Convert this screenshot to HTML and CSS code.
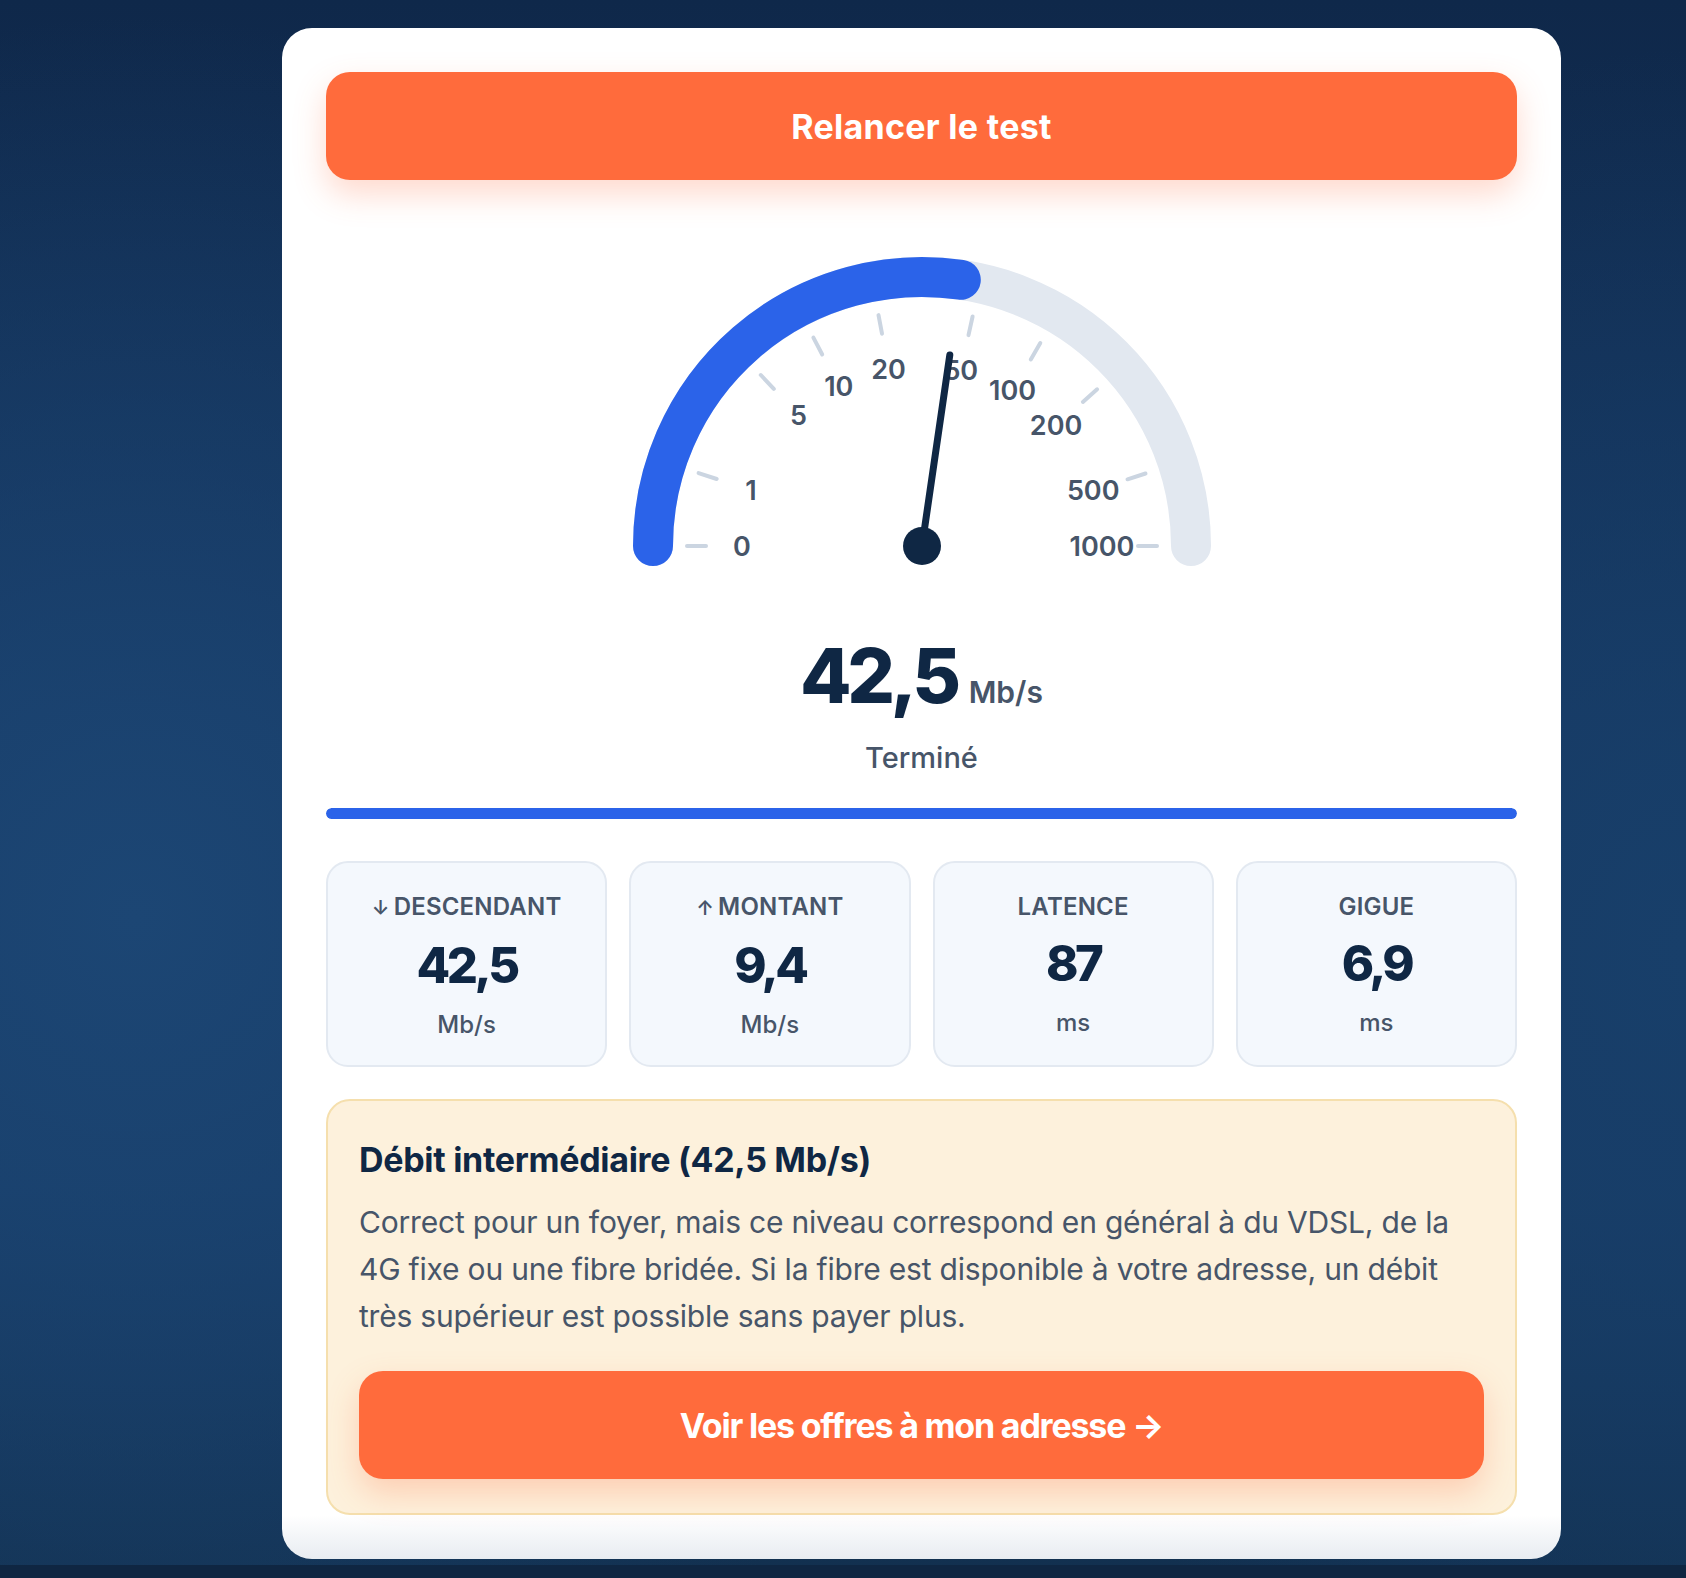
FILE: index.html
```html
<!DOCTYPE html>
<html lang="fr">
<head>
<meta charset="utf-8">
<title>Test de débit</title>
<link rel="stylesheet" href="styles.css">
</head>
<body>
<main class="page">
  <section class="card">
    <button class="btn btn-primary btn-relaunch" type="button">Relancer le test</button>

    <div class="gauge">
      <svg class="gauge-svg" width="600" height="320" viewBox="0 0 600 320" aria-hidden="true">
        <path class="gauge-track" d="M 31 290 A 269 269 0 0 1 569 290"/>
        <path class="gauge-fill" d="M 31 290 A 269 269 0 0 1 338.8 23.8"/>
        <g class="gauge-ticks">
          <line x1="84" y1="290" x2="65" y2="290"/>
          <line x1="94.7" y1="223.0" x2="76.6" y2="217.1"/>
          <line x1="151.8" y1="132.9" x2="138.8" y2="119.0"/>
          <line x1="200.2" y1="98.5" x2="191.4" y2="81.6"/>
          <line x1="260.0" y1="77.7" x2="256.5" y2="59.1"/>
          <line x1="346.5" y1="79.1" x2="350.6" y2="60.5"/>
          <line x1="408.8" y1="103.4" x2="418.3" y2="87.0"/>
          <line x1="460.9" y1="145.9" x2="475.1" y2="133.3"/>
          <line x1="505.5" y1="223.3" x2="523.5" y2="217.5"/>
          <line x1="516" y1="290" x2="535" y2="290"/>
        </g>
        <g class="gauge-labels">
          <text x="120" y="290">0</text>
          <text x="128.9" y="234.2">1</text>
          <text x="176.5" y="159.0">5</text>
          <text x="216.8" y="130.4">10</text>
          <text x="266.6" y="113.1">20</text>
          <text x="338.8" y="114.2">50</text>
          <text x="390.6" y="134.5">100</text>
          <text x="434.1" y="169.9">200</text>
          <text x="471.2" y="234.4">500</text>
          <text x="480" y="290">1000</text>
        </g>
        <line class="gauge-needle" x1="300" y1="290" x2="327.8" y2="99.0"/>
        <circle class="gauge-pivot" cx="300" cy="290" r="19"/>
      </svg>
    </div>

    <div class="reading">
      <span class="reading-value">42,5</span>
      <span class="reading-unit">Mb/s</span>
    </div>
    <div class="status">Terminé</div>

    <div class="progress"><div class="progress-fill" style="width:100%"></div></div>

    <div class="stats">
      <div class="stat">
        <div class="stat-label"><span class="stat-arrow">↓</span>Descendant</div>
        <div class="stat-value">42,5</div>
        <div class="stat-unit">Mb/s</div>
      </div>
      <div class="stat">
        <div class="stat-label"><span class="stat-arrow">↑</span>Montant</div>
        <div class="stat-value">9,4</div>
        <div class="stat-unit">Mb/s</div>
      </div>
      <div class="stat">
        <div class="stat-label">Latence</div>
        <div class="stat-value">87</div>
        <div class="stat-unit">ms</div>
      </div>
      <div class="stat">
        <div class="stat-label">Gigue</div>
        <div class="stat-value">6,9</div>
        <div class="stat-unit">ms</div>
      </div>
    </div>

    <div class="verdict">
      <h3 class="verdict-title">Débit intermédiaire (42,5 Mb/s)</h3>
      <p class="verdict-text">Correct pour un foyer, mais ce niveau correspond en général à du VDSL, de la 4G fixe ou une fibre bridée. Si la fibre est disponible à votre adresse, un débit très supérieur est possible sans payer plus.</p>
      <a class="btn btn-primary btn-cta" href="#">Voir les offres à mon adresse →</a>
    </div>
  </section>
</main>
<div class="page-foot"></div>
</body>
</html>
```

FILE: styles.css
```css
* { box-sizing: border-box; }

html, body { margin: 0; padding: 0; }

body {
  font-family: Inter, "Noto Sans", "Liberation Sans", sans-serif;
  min-height: 1578px;
  background:
    radial-gradient(ellipse 900px 900px at 8% 58%, #1c4674 0%, rgba(28,70,116,0) 100%),
    radial-gradient(ellipse 700px 900px at 100% 60%, #183f6a 0%, rgba(24,63,106,0) 100%),
    linear-gradient(180deg, #0f284a 0%, #153660 45%, #163a64 75%, #12304f 100%);
}

.page {
  padding: 28px 0 0 282px;
}

.card {
  width: 1279px;
  padding: 44px;
  border-radius: 30px;
  background: linear-gradient(180deg, #ffffff 0%, #ffffff calc(100% - 44px), #e8ecf1 100%);
}

.btn {
  font-family: inherit;
  cursor: pointer;
  text-decoration: none;
}

.btn-primary {
  display: flex;
  align-items: center;
  justify-content: center;
  width: 100%;
  height: 108px;
  border: 0;
  border-radius: 24px;
  background: #ff6b3c;
  color: #ffffff;
  font-size: 34px;
  font-weight: 700;
  box-shadow: 0 14px 32px rgba(255, 107, 60, 0.26);
}

.btn-relaunch {
  letter-spacing: 0.3px;
}

.gauge {
  display: flex;
  justify-content: center;
  margin-top: 76px;
}

.gauge-svg { display: block; overflow: visible; }

.gauge-track,
.gauge-fill {
  fill: none;
  stroke-width: 40;
  stroke-linecap: round;
}
.gauge-track { stroke: #e2e8f0; }
.gauge-fill { stroke: #2b63e9; }

.gauge-ticks line {
  stroke: #cbd5e1;
  stroke-width: 4;
  stroke-linecap: round;
}

.gauge-labels text {
  fill: #475569;
  font-family: Inter, "Noto Sans", sans-serif;
  font-size: 27px;
  font-weight: 600;
  text-anchor: middle;
  dominant-baseline: central;
}

.gauge-needle {
  stroke: #0f2744;
  stroke-width: 7;
  stroke-linecap: round;
}
.gauge-pivot { fill: #0f2744; }

.reading {
  display: flex;
  justify-content: center;
  align-items: baseline;
  gap: 12px;
  margin-top: 62px;
  height: 76px;
}

.reading-value {
  font-size: 75px;
  line-height: 76px;
  font-weight: 800;
  letter-spacing: -4.5px;
  color: #0f2744;
}

.reading-unit {
  font-size: 30px;
  line-height: 30px;
  font-weight: 600;
  color: #475569;
}

.status {
  margin-top: 26px;
  text-align: center;
  font-size: 29px;
  line-height: 35px;
  font-weight: 500;
  color: #475569;
}

.progress {
  margin-top: 33px;
  height: 11px;
  border-radius: 6px;
  background: #e2e8f0;
  overflow: hidden;
}
.progress-fill {
  height: 100%;
  background: #2b63e9;
  border-radius: 6px;
}

.stats {
  display: grid;
  grid-template-columns: repeat(4, 1fr);
  gap: 22px;
  margin-top: 42px;
}

.stat {
  display: flex;
  flex-direction: column;
  align-items: center;
  padding: 29px 10px 26px;
  border: 2px solid #e3e9f1;
  border-radius: 22px;
  background: #f4f8fd;
  text-align: center;
}

.stat-label {
  font-size: 24px;
  line-height: 29px;
  font-weight: 600;
  text-transform: uppercase;
  letter-spacing: 0.2px;
  color: #475569;
}

.stat-arrow {
  font-size: 20px;
  font-weight: 600;
  margin-right: 4px;
}

.stat-value {
  margin-top: 13px;
  font-size: 49px;
  line-height: 60px;
  font-weight: 800;
  letter-spacing: -3.5px;
  color: #0f2744;
}

.stat-unit {
  margin-top: 14px;
  font-size: 24px;
  line-height: 29px;
  font-weight: 500;
  color: #475569;
}

.verdict {
  margin-top: 32px;
  padding: 37px 31px 34px;
  border: 2px solid #f5dfad;
  border-radius: 24px;
  background: #fdf1dc;
}

.verdict-title {
  margin: 0;
  font-size: 34px;
  line-height: 44px;
  font-weight: 700;
  letter-spacing: -0.3px;
  color: #0f2744;
}

.verdict-text {
  margin: 17px 0 0;
  font-size: 30px;
  line-height: 47px;
  font-weight: 400;
  letter-spacing: -0.2px;
  color: #475569;
}

.btn-cta {
  margin-top: 31px;
  letter-spacing: -1.2px;
}

.page-foot {
  margin-top: 6px;
  height: 16px;
  background: #0f2642;
}
```
